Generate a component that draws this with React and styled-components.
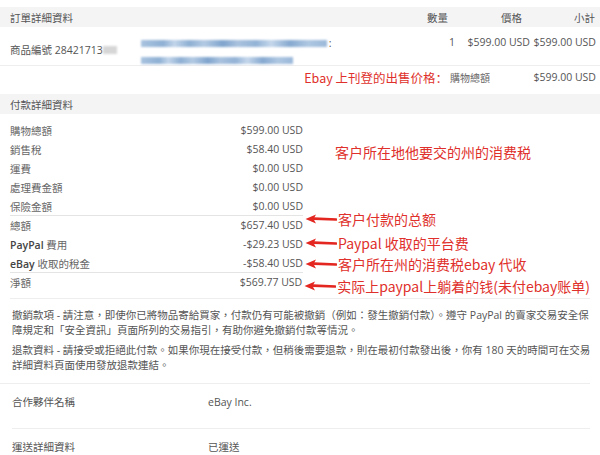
import React from 'react';
import styled, { createGlobalStyle } from 'styled-components';

const GlobalStyle = createGlobalStyle`
  body {
    margin: 0;
    background: #fff;
    font-family: "Open Sans", "Noto Sans CJK TC", sans-serif;
    color: #555;
  }
`;

const Page = styled.div`
  width: 600px;
  height: 455px;
  overflow: hidden;
  padding-top: 7px;
  box-sizing: border-box;
  font-size: 10.5px;
`;

const SectionHead = styled.div`
  height: 20px;
  background: #f4f4f5;
  display: grid;
  grid-template-columns: ${props => props.cols || '1fr'};
  align-items: center;
  padding: 0 4px 0 10px;
  color: #555;
`;

const HeadCell = styled.div`
  text-align: right;
  padding-right: ${props => props.pad || 0}px;
`;

const ItemRow = styled.div`
  display: grid;
  grid-template-columns: 1fr 50px 75px 66px;
  align-items: start;
  padding: 8px 4px 0 10px;
  height: 30px;
  border-bottom: 1px solid #eee;
`;

const ItemName = styled.div`
  display: flex;
  align-items: center;
  line-height: 14px;
`;

const Masked = styled.span`
  display: inline-block;
  width: 14px;
  height: 8px;
  background: #d6d6d6;
  filter: blur(1px);
`;

const BlurLines = styled.div`
  display: flex;
  flex-direction: column;
  gap: 7px;
  margin-left: 24px;
  padding-top: 1px;
`;

const BlurBar = styled.div`
  width: ${props => props.w}px;
  height: 7px;
  filter: blur(0.8px);
  background: linear-gradient(90deg,
    #a8c3df 0%, #8fb0d4 12%, #c2d5ea 18%, #8eafd3 26%, #b3cae3 34%,
    #7fa4cd 44%, #a9c2de 52%, #93b3d6 62%, #c5d7eb 70%, #86a9d0 80%,
    #aec7e2 90%, #9ab8d9 100%);
`;

const Colon = styled.span`
  margin-left: 2px;
  color: #555;
`;

const Cell = styled.div`
  text-align: right;
  line-height: 14px;
`;

const ListedRow = styled.div`
  display: flex;
  justify-content: flex-end;
  align-items: center;
  height: 22px;
  padding: 0 4px 0 0;
  margin-bottom: 6px;
`;

const RedText = styled.span`
  font-family: "Noto Sans CJK SC", sans-serif;
  color: #e0302b;
  font-size: ${props => props.size || 14}px;
  white-space: nowrap;
`;

const SmallLabel = styled.span`
  margin-left: 2px;
  color: #666;
  font-size: 10px;
`;

const ListedAmount = styled.span`
  width: 66px;
  margin-left: 40px;
  text-align: right;
`;

const PayBlock = styled.div`
  margin: 7px 10px 0 10px;
  padding-bottom: 6px;
  border-bottom: 1px solid #eee;
`;

const PayRow = styled.div`
  display: flex;
  align-items: center;
  height: 19px;
`;

const PayLeft = styled.div`
  width: 293px;
  height: 100%;
  display: flex;
  align-items: center;
  justify-content: space-between;
  box-sizing: border-box;
  border-bottom: 1px solid ${props => (props.ruled ? '#e4e4e4' : 'transparent')};
`;

const PayLabel = styled.span`
  color: ${props => (props.strong ? '#444' : '#666')};
  font-weight: ${props => (props.strong ? 600 : 400)};
`;

const Amount = styled.span`
  color: #555;
`;

const Note = styled.div`
  display: flex;
  align-items: center;
  margin-left: ${props => props.indent || 2}px;
  transform: translateY(${props => props.lift || 0}px);
  white-space: nowrap;
`;

const ArrowSvg = styled.svg`
  flex: none;
  margin-right: 1px;
`;

const Notices = styled.div`
  padding: 9px 10px 10px 12px;
  border-bottom: 1px solid #eee;
  margin: 0 10px 0 0;
  color: #555;
`;

const Para = styled.p`
  margin: 0 0 5px 0;
  line-height: 15px;
  white-space: nowrap;
  &:last-child {
    margin-bottom: 0;
  }
`;

const InfoRow = styled.div`
  display: grid;
  grid-template-columns: 196px 1fr;
  margin: 0 10px 0 12px;
  padding: ${props => props.pad || '11px 0 18px 0'};
  line-height: 15px;
  border-bottom: 1px solid ${props => (props.last ? 'transparent' : '#eee')};
  color: #555;
`;

const Arrow = () => (
  <ArrowSvg width="32" height="10" viewBox="0 0 32 10">
    <path d="M31 5.5 L9 4.6" stroke="#e3261f" strokeWidth="2.6" strokeLinecap="round" />
    <path d="M0.5 5 L11 0.6 L8.5 5 L11 9.4 Z" fill="#e3261f" />
  </ArrowSvg>
);

const payRows = [
  { label: '購物總額', amount: '$599.00 USD' },
  { label: '銷售稅', amount: '$58.40 USD', note: '客户所在地他要交的州的消费税', indent: 32, lift: 2 },
  { label: '運費', amount: '$0.00 USD' },
  { label: '處理費金額', amount: '$0.00 USD' },
  { label: '保險金額', amount: '$0.00 USD', ruled: true },
  { label: '總額', amount: '$657.40 USD', note: '客户付款的总额', arrow: true, lift: -7 },
  { label: 'PayPal 費用', amount: '-$29.23 USD', strong: 'PayPal', note: 'Paypal 收取的平台费', arrow: true, lift: -2 },
  { label: '收取的稅金', amount: '-$58.40 USD', strong: 'eBay', note: '客户所在州的消费税ebay 代收', arrow: true, ruled: true },
  { label: '淨額', amount: '$569.77 USD', note: '实际上paypal上躺着的钱(未付ebay账单)', arrow: true, lift: 3 }
];

const renderLabel = row => {
  if (row.strong === 'PayPal') {
    return (
      <PayLabel>
        <PayLabel strong>PayPal</PayLabel> 費用
      </PayLabel>
    );
  }
  if (row.strong === 'eBay') {
    return (
      <PayLabel>
        <PayLabel strong>eBay</PayLabel> {row.label}
      </PayLabel>
    );
  }
  return <PayLabel>{row.label}</PayLabel>;
};

const App = () => (
  <Page>
    <GlobalStyle />
    <SectionHead cols="1fr 50px 75px 66px">
      <div>訂單詳細資料</div>
      <HeadCell pad={7}>數量</HeadCell>
      <HeadCell pad={8}>價格</HeadCell>
      <HeadCell pad={1}>小計</HeadCell>
    </SectionHead>

    <ItemRow>
      <ItemName>
        商品編號 28421713
        <Masked />
        <BlurLines>
          <ItemName>
            <BlurBar w={186} />
            <Colon>:</Colon>
          </ItemName>
          <BlurBar w={152} />
        </BlurLines>
      </ItemName>
      <Cell>1</Cell>
      <Cell>$599.00 USD</Cell>
      <Cell>$599.00 USD</Cell>
    </ItemRow>

    <ListedRow>
      <RedText size={12.5}>Ebay 上刊登的出售价格：</RedText>
      <SmallLabel>購物總額</SmallLabel>
      <ListedAmount>$599.00 USD</ListedAmount>
    </ListedRow>

    <SectionHead>
      <div>付款詳細資料</div>
    </SectionHead>

    <PayBlock>
      {payRows.map(row => (
        <PayRow key={row.label}>
          <PayLeft ruled={row.ruled}>
            {renderLabel(row)}
            <Amount>{row.amount}</Amount>
          </PayLeft>
          {row.note && (
            <Note indent={row.indent} lift={row.lift}>
              {row.arrow && <Arrow />}
              <RedText>{row.note}</RedText>
            </Note>
          )}
        </PayRow>
      ))}
    </PayBlock>

    <Notices>
      <Para>
        撤銷款項 - 請注意，即使你已將物品寄給買家，付款仍有可能被撤銷（例如：發生撤銷付款）。遵守 PayPal 的賣家交易安全保
        <br />
        障規定和「安全資訊」頁面所列的交易指引，有助你避免撤銷付款等情況。
      </Para>
      <Para>
        退款資料 - 請接受或拒絕此付款。如果你現在接受付款，但稍後需要退款，則在最初付款發出後，你有 180 天的時間可在交易
        <br />
        詳細資料頁面使用發放退款連結。
      </Para>
    </Notices>

    <InfoRow>
      <span>合作夥伴名稱</span>
      <span>eBay Inc.</span>
    </InfoRow>
    <InfoRow pad="11px 0 6px 0" last>
      <span>運送詳細資料</span>
      <span>已運送</span>
    </InfoRow>
  </Page>
);

export default App;
